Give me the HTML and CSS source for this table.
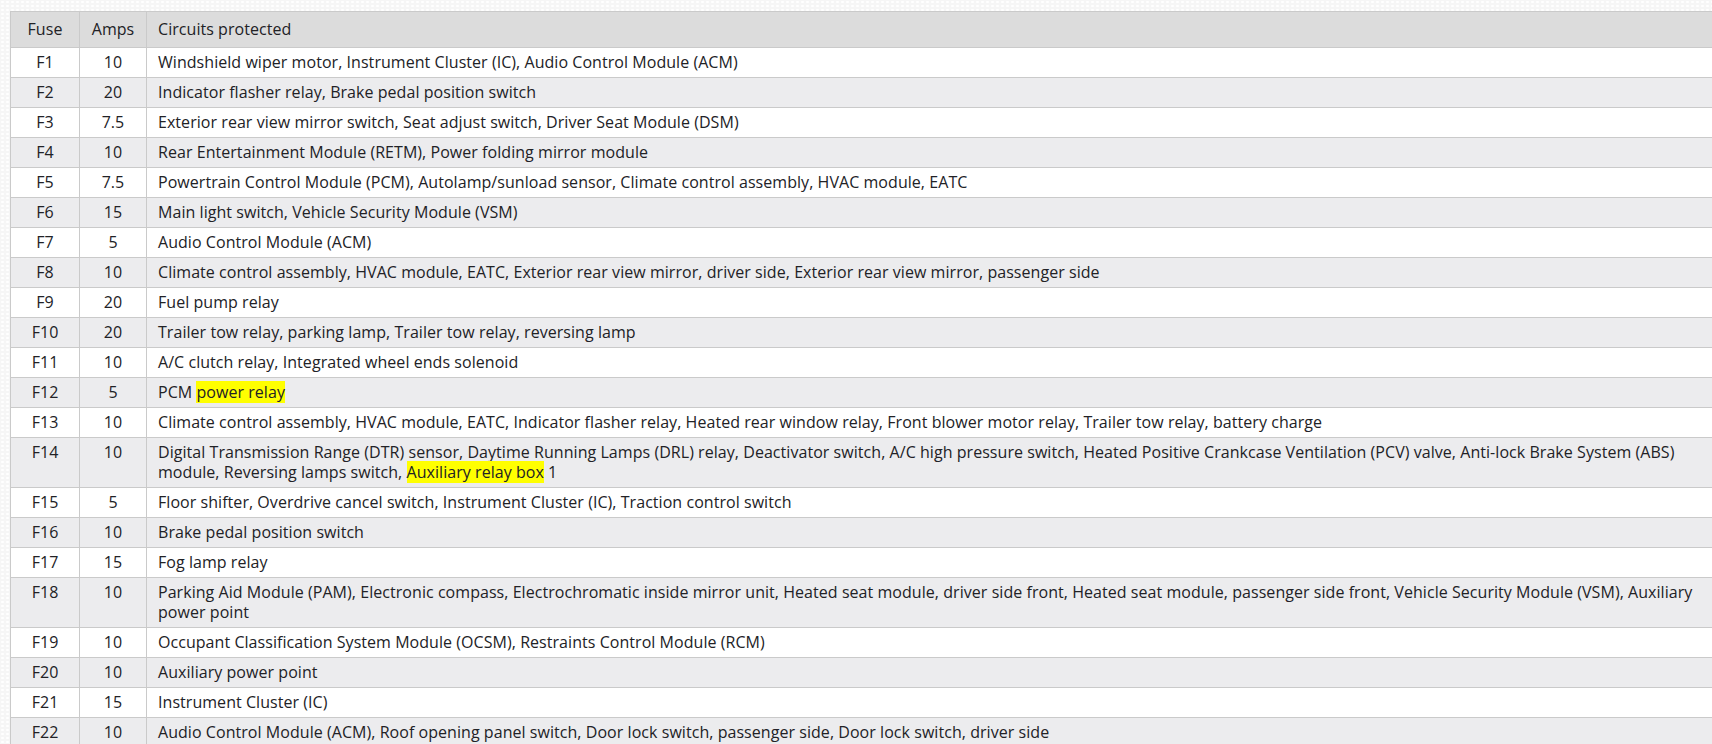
FILE: index.html
```html
<!DOCTYPE html>
<html lang="en">
<head>
<meta charset="utf-8">
<title>Fuse box</title>
<link rel="stylesheet" href="styles.css">
</head>
<body>
<table class="fuses">
  <thead>
    <tr><th class="c-fuse">Fuse</th><th class="c-amps">Amps</th><th class="c-desc">Circuits protected</th></tr>
  </thead>
  <tbody>
    <tr><td class="c-fuse">F1</td><td class="c-amps">10</td><td class="c-desc">Windshield wiper motor, Instrument Cluster (IC), Audio Control Module (ACM)</td></tr>
    <tr><td class="c-fuse">F2</td><td class="c-amps">20</td><td class="c-desc">Indicator flasher relay, Brake pedal position switch</td></tr>
    <tr><td class="c-fuse">F3</td><td class="c-amps">7.5</td><td class="c-desc">Exterior rear view mirror switch, Seat adjust switch, Driver Seat Module (DSM)</td></tr>
    <tr><td class="c-fuse">F4</td><td class="c-amps">10</td><td class="c-desc">Rear Entertainment Module (RETM), Power folding mirror module</td></tr>
    <tr><td class="c-fuse">F5</td><td class="c-amps">7.5</td><td class="c-desc">Powertrain Control Module (PCM), Autolamp/sunload sensor, Climate control assembly, HVAC module, EATC</td></tr>
    <tr><td class="c-fuse">F6</td><td class="c-amps">15</td><td class="c-desc">Main light switch, Vehicle Security Module (VSM)</td></tr>
    <tr><td class="c-fuse">F7</td><td class="c-amps">5</td><td class="c-desc">Audio Control Module (ACM)</td></tr>
    <tr><td class="c-fuse">F8</td><td class="c-amps">10</td><td class="c-desc">Climate control assembly, HVAC module, EATC, Exterior rear view mirror, driver side, Exterior rear view mirror, passenger side</td></tr>
    <tr><td class="c-fuse">F9</td><td class="c-amps">20</td><td class="c-desc">Fuel pump relay</td></tr>
    <tr><td class="c-fuse">F10</td><td class="c-amps">20</td><td class="c-desc">Trailer tow relay, parking lamp, Trailer tow relay, reversing lamp</td></tr>
    <tr><td class="c-fuse">F11</td><td class="c-amps">10</td><td class="c-desc">A/C clutch relay, Integrated wheel ends solenoid</td></tr>
    <tr><td class="c-fuse">F12</td><td class="c-amps">5</td><td class="c-desc">PCM <mark class="hl">power relay</mark></td></tr>
    <tr><td class="c-fuse">F13</td><td class="c-amps">10</td><td class="c-desc">Climate control assembly, HVAC module, EATC, Indicator flasher relay, Heated rear window relay, Front blower motor relay, Trailer tow relay, battery charge</td></tr>
    <tr><td class="c-fuse">F14</td><td class="c-amps">10</td><td class="c-desc">Digital Transmission Range (DTR) sensor, Daytime Running Lamps (DRL) relay, Deactivator switch, A/C high pressure switch, Heated Positive Crankcase Ventilation (PCV) valve, Anti-lock Brake System (ABS) module, Reversing lamps switch, <mark class="hl">Auxiliary relay box</mark> 1</td></tr>
    <tr><td class="c-fuse">F15</td><td class="c-amps">5</td><td class="c-desc">Floor shifter, Overdrive cancel switch, Instrument Cluster (IC), Traction control switch</td></tr>
    <tr><td class="c-fuse">F16</td><td class="c-amps">10</td><td class="c-desc">Brake pedal position switch</td></tr>
    <tr><td class="c-fuse">F17</td><td class="c-amps">15</td><td class="c-desc">Fog lamp relay</td></tr>
    <tr><td class="c-fuse">F18</td><td class="c-amps">10</td><td class="c-desc">Parking Aid Module (PAM), Electronic compass, Electrochromatic inside mirror unit, Heated seat module, driver side front, Heated seat module, passenger side front, Vehicle Security Module (VSM), Auxiliary power point</td></tr>
    <tr><td class="c-fuse">F19</td><td class="c-amps">10</td><td class="c-desc">Occupant Classification System Module (OCSM), Restraints Control Module (RCM)</td></tr>
    <tr><td class="c-fuse">F20</td><td class="c-amps">10</td><td class="c-desc">Auxiliary power point</td></tr>
    <tr><td class="c-fuse">F21</td><td class="c-amps">15</td><td class="c-desc">Instrument Cluster (IC)</td></tr>
    <tr><td class="c-fuse">F22</td><td class="c-amps">10</td><td class="c-desc">Audio Control Module (ACM), Roof opening panel switch, Door lock switch, passenger side, Door lock switch, driver side</td></tr>
  </tbody>
</table>
</body>
</html>
```
FILE: styles.css
```css
html, body {
  overflow: hidden;
}
body {
  margin: 0;
  padding: 11px 0 0 10px;
  background-color: #f6f6f6;
  background-image: radial-gradient(circle, #ffffff 1px, transparent 1.5px);
  background-size: 5px 4px;
  font-family: "Open Sans", "Noto Sans", sans-serif;
  font-size: 16px;
  letter-spacing: 0.05px;
  color: #222226;
}
.fuses {
  width: 1718px;
  border-collapse: collapse;
  background: #ffffff;
  table-layout: fixed;
}
.fuses th,
.fuses td {
  border: 1px solid #cacaca;
  line-height: 20px;
  padding: 4px 11px 5px;
  font-weight: 400;
  vertical-align: top;
}
.fuses th {
  background: #dcdcdc;
  padding: 7px 11px 8px;
}
.fuses tbody tr:nth-child(even) td {
  background: #ececee;
}
.fuses th.c-fuse, .fuses td.c-fuse { width: 46px; text-align: center; }
.fuses th.c-amps, .fuses td.c-amps { width: 44px; text-align: center; }
.c-desc {
  text-align: left;
}
.hl {
  background: #ffff00;
  color: inherit;
  line-height: 19px;
}
```
